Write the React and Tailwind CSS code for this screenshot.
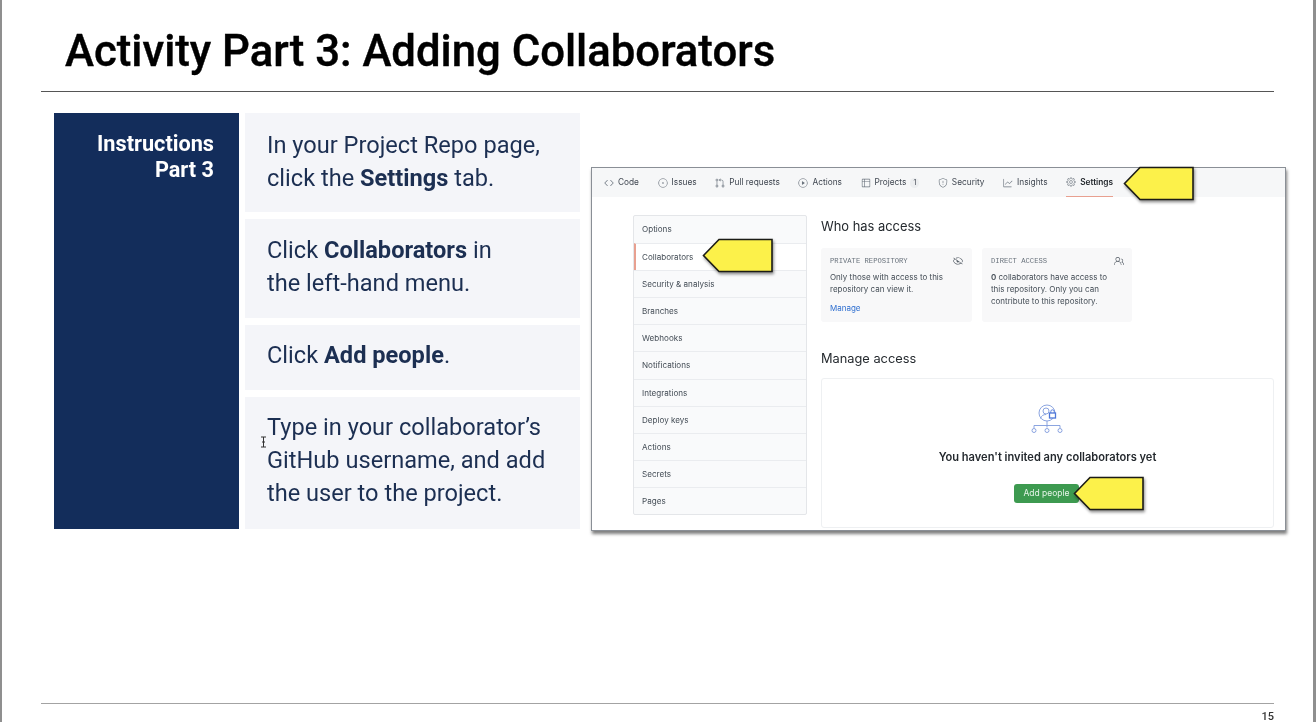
import React from 'react';
import { GoCode, GoIssueOpened, GoGitPullRequest, GoPlay, GoTable, GoShield, GoGraph, GoGear, GoEyeClosed, GoPeople } from 'react-icons/go';

const tabs = [
    { label: 'Code', icon: GoCode },
    { label: 'Issues', icon: GoIssueOpened },
    { label: 'Pull requests', icon: GoGitPullRequest },
    { label: 'Actions', icon: GoPlay },
    { label: 'Projects', icon: GoTable, badge: '1' },
    { label: 'Security', icon: GoShield },
    { label: 'Insights', icon: GoGraph },
    { label: 'Settings', icon: GoGear, active: true },
];

const menu = ['Options', 'Collaborators', 'Security & analysis', 'Branches', 'Webhooks', 'Notifications', 'Integrations', 'Deploy keys', 'Actions', 'Secrets', 'Pages'];

// yellow callout arrow, sits on top of the screenshot
const Arrow = ({ className }) => (
    <svg className={`absolute w-[72px] h-[36px] drop-shadow-[1px_2px_1.5px_rgba(0,0,0,0.45)] ${className}`} viewBox="0 0 72 36">
        <path d="M1.5 17.5 L17 1.5 H70 V33.5 H17 Z" fill="#fcf14a" stroke="#1c1c16" strokeWidth="1.6" strokeLinejoin="miter" />
    </svg>
);

const CollabIcon = () => (
    <svg width="32" height="30" viewBox="0 0 32 30" fill="none" stroke="#7f9bdc" strokeWidth="0.9">
        <circle cx="16" cy="9" r="8" />
        <circle cx="15" cy="7" r="3" />
        <path d="M9.5 14.5c1-3 3-4 5.500-4" />
        <rect x="18.500" y="9" width="6" height="5" fill="#fff" stroke="#4f78d8" strokeWidth="1.300" />
        <path d="M19.800 9V7.500a1.700 1.700 0 0 1 3.400 0V9" stroke="#4f78d8" />
        <path d="M3 24v-2.500h26V24M16 17v6.500" />
        <circle cx="3" cy="26.500" r="2" />
        <circle cx="16" cy="26.500" r="2" />
        <circle cx="29" cy="26.500" r="2" />
    </svg>
);

const steps = [
    { box: 'h-[99px] pt-[16px]', body: <>In your Project Repo page,<br />click the <b className="font-bold">Settings</b> tab.</> },
    { box: 'h-[99px] pt-[15px]', body: <>Click <b className="font-bold">Collaborators</b> in<br />the left-hand menu.</> },
    { box: 'h-[65px] pt-[14px]', body: <>Click <b className="font-bold">Add people</b>.</> },
    { box: 'h-[132px] pt-[14px]', body: <>Type in your collaborator’s<br />GitHub username, and add<br />the user to the project.</> },
];

export default function App() {
    return (
        <div className="relative w-[1316px] h-[722px] overflow-hidden bg-white border-l-2 border-r-[3px] border-[#8f8f8f] flex flex-col font-['Roboto',sans-serif] blur-[0.35px]">
            {/* Title */}
            <div className="h-[92px] ml-[39px] w-[1233px] border-b border-[#555] shrink-0">
                <h1 className="pl-6 pt-[22px] text-[43.700px] leading-[58px] font-medium text-black [-webkit-text-stroke:0.4px_black] whitespace-nowrap">Activity Part 3: Adding Collaborators</h1>
            </div>

            <div className="flex items-start pl-[52px] pt-[21px]">
                {/* Instructions */}
                <div className="w-[185px] h-[416px] bg-[#132d5b] text-white text-right text-[21.700px] leading-[26px] font-bold pt-[18px] pr-[25px] shrink-0">
                    Instructions<br />Part 3
                </div>
                <div className="w-[335px] ml-[6px] flex flex-col gap-[7px] shrink-0">
                    {steps.map((s, i) => (
                        <div key={i} className={`${s.box} bg-[#f4f5f9] pl-[22px] text-[23.600px] leading-[33px] text-[#1c2f52]`}>{s.body}</div>
                    ))}
                </div>

                {/* GitHub settings screenshot */}
                <div className="relative ml-[11px] mt-[54px] w-[695px] h-[364px] bg-white border border-[#8a8f96] shadow-[1px_3px_3px_rgba(0,0,0,0.5)] shrink-0 font-['Inter',sans-serif]">
                    <div className="h-[29px] bg-[#f6f7f8] flex items-stretch gap-[18.600px] pl-[12px] text-[8.300px] text-[#3f4650]">
                        {tabs.map(t => {
                            const Icon = t.icon;
                            return (
                                <div key={t.label} className={`flex items-center gap-[4px] ${t.active ? 'font-semibold text-[#24292e] border-b border-[#e8a090]' : ''}`}>
                                    <Icon size={10} className="text-[#6a737d] shrink-0" />
                                    <span>{t.label}</span>
                                    {t.badge && <span className="px-[3px] rounded-full bg-[#eceef0] text-[7px] leading-[10px]">{t.badge}</span>}
                                </div>
                            );
                        })}
                    </div>

                    <div className="flex items-start pl-[41px] pt-[18px]">
                        {/* Side menu */}
                        <div className="w-[174px] border border-[#e4e6e9] rounded-[2px] bg-[#f9fafb] text-[8.100px] text-[#444d56] shrink-0">
                            {menu.map((m, i) => (
                                <div key={m} className={`h-[27.100px] flex items-center pl-[8px] ${i > 0 ? 'border-t border-[#eaecef]' : ''} ${m === 'Collaborators' ? 'bg-white border-l-2 border-l-[#e8a090] !pl-[6px]' : ''}`}>{m}</div>
                            ))}
                        </div>

                        <div className="ml-[14px] w-[453px] mt-[2px]">
                            <h2 className="text-[12.900px] leading-[20px] text-[#24292e]">Who has access</h2>
                            <div className="flex gap-[10px] mt-[11px]">
                                <div className="relative w-[151px] h-[74px] bg-[#f8f8f9] rounded-[3px] pl-[9px] pr-[9px] pt-[7px] text-[8px] leading-[12px] text-[#444d56]">
                                    <p className="font-['Liberation_Mono',monospace] text-[7.200px] text-[#6a737d] mb-[4px]">PRIVATE REPOSITORY</p>
                                    <GoEyeClosed size={10} className="absolute right-[9px] top-[8px] text-[#586069]" />
                                    <p>Only those with access to this repository can view it.</p>
                                    <p className="mt-[7px] text-[#2f6fd0]">Manage</p>
                                </div>
                                <div className="relative w-[150px] h-[74px] bg-[#f8f8f9] rounded-[3px] pl-[9px] pr-[18px] pt-[7px] text-[8px] leading-[12px] text-[#444d56]">
                                    <p className="font-['Liberation_Mono',monospace] text-[7.200px] text-[#6a737d] mb-[4px]">DIRECT ACCESS</p>
                                    <GoPeople size={10} className="absolute right-[8px] top-[8px] text-[#586069]" />
                                    <p><b className="font-semibold">0</b> collaborators have access to this repository. Only you can contribute to this repository.</p>
                                </div>
                            </div>
                            <h2 className="mt-[27px] text-[12.800px] leading-[20px] text-[#24292e]">Manage access</h2>
                            <div className="mt-[9px] h-[150px] border border-[#eef0f2] rounded-[3px] flex flex-col items-center pt-[25px]">
                                <div className="-translate-x-[1px]"><CollabIcon /></div>
                                <p className="mt-[15px] text-[11.100px] leading-[16px] font-semibold text-[#24292e]">You haven't invited any collaborators yet</p>
                                <div className="mt-[19px] w-[65px] h-[19px] -translate-x-[1px] rounded-[3px] bg-[#3d9a50] text-[#e6f4e8] text-[8.500px] flex items-center justify-center">Add people</div>
                            </div>
                        </div>
                    </div>

                    <Arrow className="left-[531px] -top-[2px]" />
                    <Arrow className="left-[110px] top-[70px]" />
                    <Arrow className="left-[481px] top-[308px]" />
                </div>
            </div>

            {/* Footer */}
            <div className="mt-auto ml-[39px] w-[1233px] border-t border-[#a3a3a3] h-[19px] text-right text-[11px] leading-[12px] pt-[7px] font-medium text-[#333] shrink-0">15</div>

            {/* text cursor from the recording */}
            <svg className="absolute left-[258px] top-[436px]" width="7" height="12" viewBox="0 0 7 12" fill="none" stroke="#333" strokeWidth="1">
                <path d="M1 1h5M3.500 1v10M1 11h5M2 6h3" />
            </svg>
        </div>
    );
}
